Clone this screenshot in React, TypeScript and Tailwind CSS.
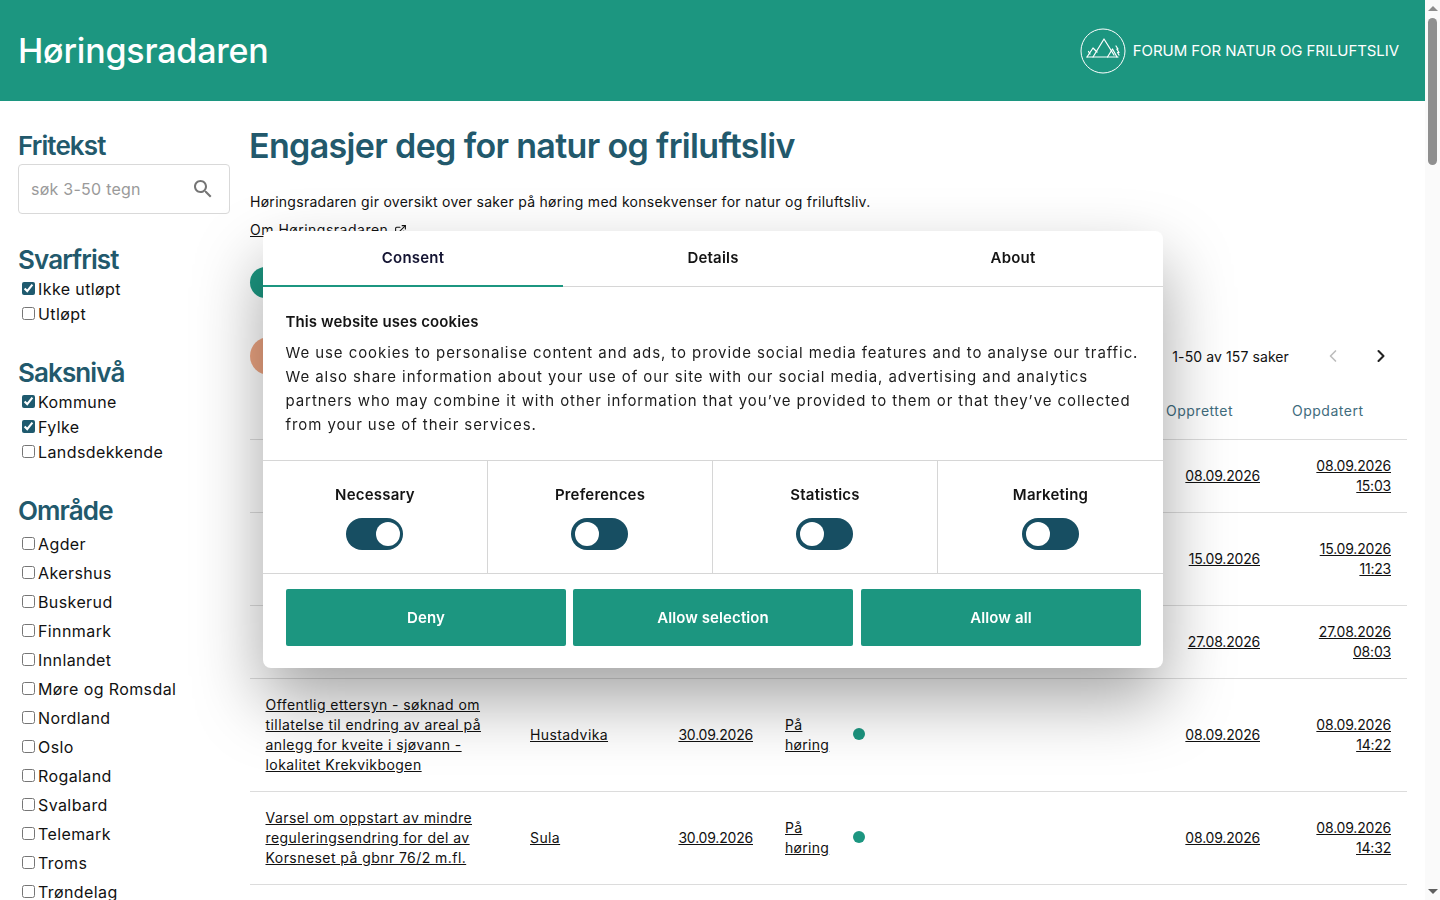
import { ExternalLink, ChevronLeft, ChevronRight } from 'lucide-react';

const svarfrist = [
  { label: 'Ikke utløpt', checked: true },
  { label: 'Utløpt', checked: false },
];
const saksniva = [
  { label: 'Kommune', checked: true },
  { label: 'Fylke', checked: true },
  { label: 'Landsdekkende', checked: false },
];
const omrade = ['Agder', 'Akershus', 'Buskerud', 'Finnmark', 'Innlandet', 'Møre og Romsdal', 'Nordland', 'Oslo', 'Rogaland', 'Svalbard', 'Telemark', 'Troms', 'Trøndelag'];

const rows = [
  { h: 'h-[73px]', title: '', place: '', due: '', created: '08.09.2026', date: '08.09.2026', time: '15:03' },
  { h: 'h-[93px]', title: '', place: '', due: '', created: '15.09.2026', date: '15.09.2026', time: '11:23' },
  { h: 'h-[73px]', title: '', place: '', due: '', created: '27.08.2026', date: '27.08.2026', time: '08:03' },
  {
    h: 'h-[113px]',
    title: 'Offentlig ettersyn - søknad om tillatelse til endring av areal på anlegg for kveite i sjøvann - lokalitet Krekvikbogen',
    place: 'Hustadvika',
    due: '30.09.2026',
    created: '08.09.2026',
    date: '08.09.2026',
    time: '14:22',
  },
  {
    h: 'h-[93px]',
    title: 'Varsel om oppstart av mindre reguleringsendring for del av Korsneset på gbnr 76/2 m.fl.',
    place: 'Sula',
    due: '30.09.2026',
    created: '08.09.2026',
    date: '08.09.2026',
    time: '14:32',
  },
];

function Check({ label, checked, row }: { label: string; checked?: boolean; row: string }) {
  return (
    <label className={`flex items-center pl-[4px] text-[16px] leading-[24px] tracking-[0.4px] text-[#111] ${row}`}>
      <input type="checkbox" defaultChecked={checked} className="m-0 mr-[3px] h-[13px] w-[13px] accent-[#1f5a6e]" />
      {label}
    </label>
  );
}

function Heading({ children }: { children: React.ReactNode }) {
  return <h2 className="text-[26px] font-semibold leading-[32px] tracking-[-0.9px] text-[#22596c]">{children}</h2>;
}

function Logo() {
  return (
    <svg width="46" height="46" viewBox="0 0 46 46" fill="none" stroke="white" className="shrink-0">
      <circle cx="23" cy="23" r="22" strokeWidth="1" />
      <g strokeWidth="1.2" strokeLinejoin="round" strokeLinecap="round">
        <path d="M13 29 L24 11 L34 27" />
        <path d="M27.5 29 L32.5 21 L37 29" />
        <path d="M7 29 L13 20 L17 24" />
        <path d="M7 29 H38" />
        <path d="M36 18 L38 21 L36.8 21 L39 24.5 L37.5 24.5 L39 27" />
        <path d="M10 26 L8.5 23.5" />
      </g>
    </svg>
  );
}

function SearchIcon() {
  return (
    <svg width="24" height="24" viewBox="0 0 24 24" fill="#757575">
      <path d="M15.5 14h-.79l-.28-.27C15.41 12.59 16 11.11 16 9.5 16 5.91 13.09 3 9.5 3S3 5.91 3 9.5 5.91 16 9.5 16c1.61 0 3.09-.59 4.23-1.57l.27.28v.79l5 4.99L20.49 19l-4.99-5zm-6 0C7.01 14 5 11.99 5 9.5S7.01 5 9.5 5 14 7.01 14 9.5 11.99 14 9.5 14z" />
    </svg>
  );
}

function Toggle({ on }: { on?: boolean }) {
  return (
    <div className={`flex h-[32px] w-[57px] items-center rounded-full bg-[#174e62] pl-[4px] pr-[3px] ${on ? 'justify-end' : 'justify-start'}`}>
      <div className="h-[24px] w-[24px] rounded-full bg-white" />
    </div>
  );
}

function Dialog() {
  return (
    <div className="fixed left-[263px] top-[231px] z-50 w-[900px] rounded-lg bg-white text-[#141414] shadow-[0_32px_68px_rgba(0,0,0,0.36)]">
      <div className="flex h-[56px] border-b border-[#d6d6d6] text-[15px] font-semibold tracking-[0.2px]">
        <div className="flex h-[56px] w-[300px] items-center justify-center border-b-2 border-[#1c9680] text-[#141432]">Consent</div>
        <div className="flex w-[300px] items-center justify-center">Details</div>
        <div className="flex w-[300px] items-center justify-center">About</div>
      </div>
      <div className="h-[173px] px-[22.5px] pt-[23px]">
        <div className="text-[15px] font-semibold leading-[24px] tracking-[0.1px]">This website uses cookies</div>
        <p className="mt-[7px] text-[15px] leading-[24px] tracking-[0.92px] text-[#1c1c1c]">
          We use cookies to personalise content and ads, to provide social media features and to analyse our traffic.
          <br />
          We also share information about your use of our site with our social media, advertising and analytics
          <br />
          partners who may combine it with other information that you’ve provided to them or that they’ve collected
          <br />
          from your use of their services.
        </p>
      </div>
      <div className="grid h-[114px] grid-cols-4 border-y border-[#d6d6d6]">
        {['Necessary', 'Preferences', 'Statistics', 'Marketing'].map((name, i) => (
          <div key={name} className={`flex flex-col items-center pt-[22px] ${i < 3 ? 'border-r border-[#d6d6d6]' : ''}`}>
            <span className="text-[15px] font-semibold leading-[24px] tracking-[0.2px]">{name}</span>
            <div className={`mt-[11px] ${i < 3 ? 'mr-[1px]' : ''}`}>
              <Toggle on={i === 0} />
            </div>
          </div>
        ))}
      </div>
      <div className="flex gap-[7px] px-[23px] pb-[22px] pt-[15px]">
        {['Deny', 'Allow selection', 'Allow all'].map((b, i) => (
          <button key={b} className={`h-[57px] w-[280px] shrink-0 rounded-[2px] bg-[#1c9680] pt-[2px] text-[15px] font-semibold tracking-[0.1px] text-white ${i === 2 ? 'ml-[1px]' : ''}`}>
            {b}
          </button>
        ))}
      </div>
    </div>
  );
}

function Scrollbar() {
  return (
    <div className="fixed right-0 top-0 z-40 flex h-screen w-[15px] flex-col items-center bg-[#fafafa]">
      <div className="mt-[6px] h-0 w-0 border-x-[5px] border-b-[5px] border-x-transparent border-b-[#8c8c8c]" />
      <div className="mt-[7px] h-[147px] w-[9px] rounded-full bg-[#8f8f8f]" />
      <div className="mt-auto mb-[6px] h-0 w-0 border-x-[5px] border-t-[5px] border-x-transparent border-t-[#5f5f5f]" />
    </div>
  );
}

export default function App() {
  return (
    <div className="h-screen w-[1425px] overflow-hidden bg-white font-[Inter,sans-serif] text-[#111]">
      <header className="flex h-[101px] items-center justify-between bg-[#1c9680] pl-[18px] pr-[26px] text-white">
        <div className="text-[34px] font-medium tracking-[-0.2px]">Høringsradaren</div>
        <div className="flex items-center gap-[7px]">
          <Logo />
          <span className="pt-[1px] text-[15px] tracking-[-0.07px]">FORUM FOR NATUR OG FRILUFTSLIV</span>
        </div>
      </header>

      <div className="flex pl-[18px] pr-[18px]">
        <aside className="w-[212px] shrink-0 pt-[29px]">
          <Heading>Fritekst</Heading>
          <div className="mt-[2px] flex h-[50px] items-center justify-between rounded-[4px] border border-[#d9d9d9] pl-[12px] pr-[14px]">
            <span className="text-[16px] tracking-[0.25px] text-[#9a9a9a]">søk 3-50 tegn</span>
            <SearchIcon />
          </div>

          <div className="mt-[30px]">
            <Heading>Svarfrist</Heading>
            <div>
              {svarfrist.map((c) => (
                <Check key={c.label} label={c.label} checked={c.checked} row="h-[25px]" />
              ))}
            </div>
          </div>

          <div className="mt-[31px]">
            <Heading>Saksnivå</Heading>
            <div>
              {saksniva.map((c) => (
                <Check key={c.label} label={c.label} checked={c.checked} row="h-[25px]" />
              ))}
            </div>
          </div>

          <div className="mt-[31px]">
            <Heading>Område</Heading>
            <div className="mt-[2px]">
              {omrade.map((o) => (
                <Check key={o} label={o} row="h-[29px]" />
              ))}
            </div>
          </div>
        </aside>

        <main className="ml-[20px] w-[1157px]">
          <h1 className="-ml-[1px] pt-[22px] text-[34px] font-semibold leading-[46px] tracking-[-0.65px] text-[#22596c]">Engasjer deg for natur og friluftsliv</h1>
          <p className="mt-[23px] text-[14px] leading-[20px] tracking-[0.28px]">Høringsradaren gir oversikt over saker på høring med konsekvenser for natur og friluftsliv.</p>
          <a className="mt-[8px] flex items-center gap-[6px] text-[14px] leading-[20px] tracking-[0.5px]">
            <span className="underline">Om Høringsradaren</span>
            <ExternalLink size={13} />
          </a>

          <div className="mt-[27px] h-[31px] w-[140px] rounded-full bg-[#1c9680]" />

          <div className="mt-[39px] flex h-[38px] items-center justify-between">
            <div className="h-[38px] w-[120px] rounded-full bg-[#eda582]" />
            <div className="flex items-center pr-[16px]">
              <span className="text-[14px] tracking-[0.1px]">1-50 av 157 saker</span>
              <ChevronLeft size={20} className="ml-[34px] text-[#bdbdbd]" />
              <ChevronRight size={20} strokeWidth={2.5} className="ml-[28px] text-[#222]" />
            </div>
          </div>

          <div className="mt-[17px] grid h-[48px] grid-cols-[264px_135px_120px_84px_1fr_131px_131px] border-b border-[#dcdcdc] pt-[8px] text-[14px] tracking-[0.5px] text-[#3f6c7d]">
            <div className="col-start-6 pl-[21px]">Opprettet</div>
            <div className="pl-[16px]">Oppdatert</div>
          </div>

          {rows.map((r) => (
            <div key={r.created + r.time} className={`grid grid-cols-[264px_135px_120px_84px_1fr_131px_131px] items-center border-b border-[#dcdcdc] text-[14px] leading-[20px] ${r.h}`}>
              <div className="pl-[15.5px] tracking-[0.44px]">
                <a className="underline">{r.title}</a>
              </div>
              <div className="pl-[16px] tracking-[0.4px]">
                <a className="underline">{r.place}</a>
              </div>
              <div className="pr-[16px] text-right tracking-[-0.2px]">
                <a className="underline">{r.due}</a>
              </div>
              <div className="pl-[16px] pr-[20px] tracking-[0.3px]">{r.due && <a className="underline">På høring</a>}</div>
              <div>{r.due && <div className="mb-[2px] h-[12px] w-[12px] rounded-full bg-[#1c9680]" />}</div>
              <div className="pr-[16px] text-right tracking-[-0.2px]">
                <a className="underline">{r.created}</a>
              </div>
              <div className="pr-[16px] text-right tracking-[-0.2px]">
                <a className="underline">
                  {r.date}
                  <br />
                  {r.time}
                </a>
              </div>
            </div>
          ))}
        </main>
      </div>

      <Dialog />
      <Scrollbar />
    </div>
  );
}
